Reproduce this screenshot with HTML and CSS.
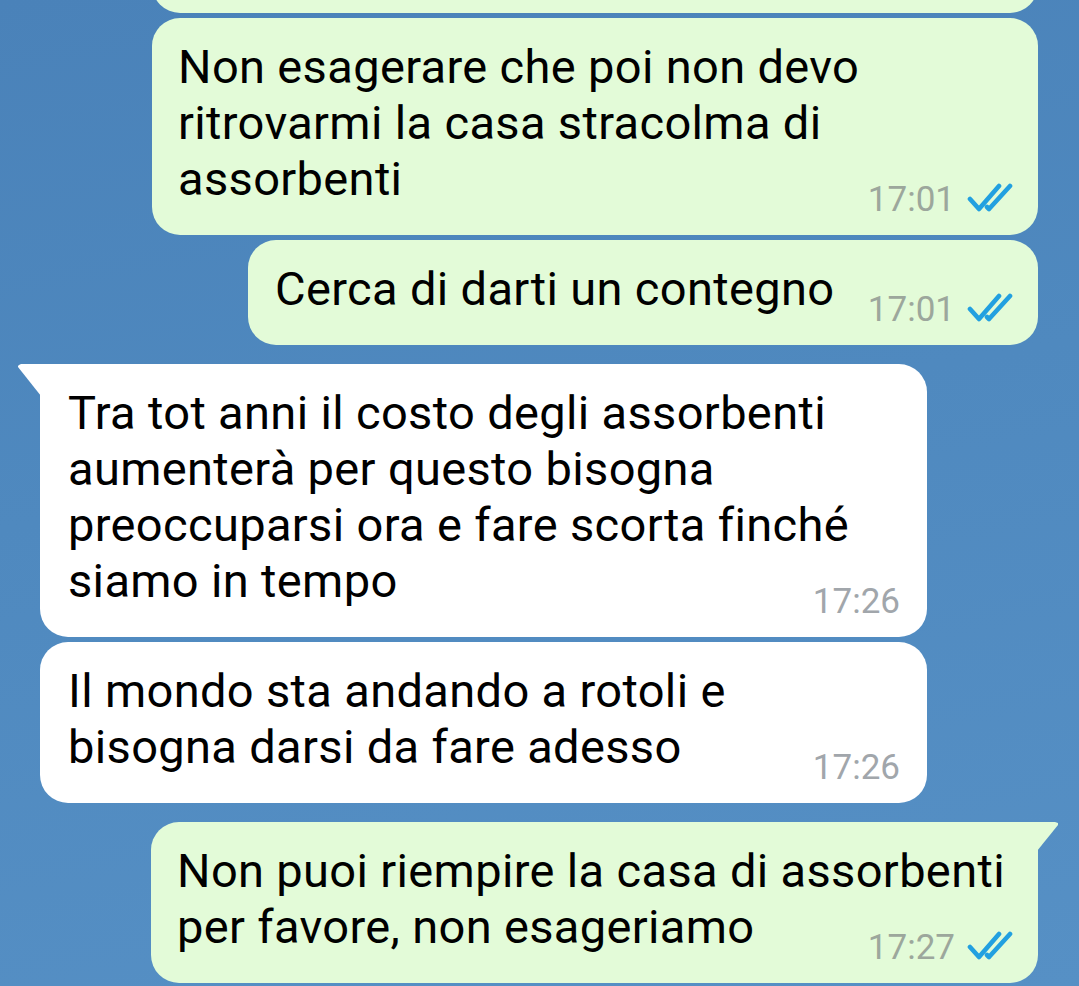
FILE: index.html
```html
<!DOCTYPE html>
<html lang="it">
<head>
<meta charset="utf-8">
<title>Chat</title>
<link rel="stylesheet" href="styles.css">
</head>
<body>
<main class="chat">
  <div class="row out first">
    <div class="bubble out b0"></div>
  </div>
  <div class="row out gap-s">
    <div class="bubble out b1">
      <div class="text">Non esagerare che poi non devo<br>ritrovarmi la casa stracolma di<br>assorbenti</div>
      <div class="meta"><span class="time">17:01</span><svg class="check" viewBox="0 0 46 30" width="46" height="30"><path d="M3 16 L12 26 L32 3"/><path d="M20 24 L22 26 L43 3"/></svg></div>
    </div>
  </div>
  <div class="row out gap-s">
    <div class="bubble out b2">
      <div class="text">Cerca di darti un contegno</div>
      <div class="meta"><span class="time">17:01</span><svg class="check" viewBox="0 0 46 30" width="46" height="30"><path d="M3 16 L12 26 L32 3"/><path d="M20 24 L22 26 L43 3"/></svg></div>
    </div>
  </div>
  <div class="row in gap-l">
    <div class="bubble in b3 tail-left">
      <div class="text">Tra tot anni il costo degli assorbenti<br>aumenterà per questo bisogna<br>preoccuparsi ora e fare scorta finché<br>siamo in tempo</div>
      <div class="meta"><span class="time">17:26</span></div>
    </div>
  </div>
  <div class="row in gap-s">
    <div class="bubble in b4">
      <div class="text">Il mondo sta andando a rotoli e<br>bisogna darsi da fare adesso</div>
      <div class="meta"><span class="time">17:26</span></div>
    </div>
  </div>
  <div class="row out gap-l">
    <div class="bubble out b5 tail-right">
      <div class="text">Non puoi riempire la casa di assorbenti<br>per favore, non esageriamo</div>
      <div class="meta"><span class="time">17:27</span><svg class="check" viewBox="0 0 46 30" width="46" height="30"><path d="M3 16 L12 26 L32 3"/><path d="M20 24 L22 26 L43 3"/></svg></div>
    </div>
  </div>
</main>
</body>
</html>
```

FILE: styles.css
```css
html, body {
  margin: 0;
  padding: 0;
}

body {
  width: 1079px;
  height: 986px;
  overflow: hidden;
  background: linear-gradient(170deg, #4a82b9 0%, #4f89bf 45%, #5690c5 100%);
  font-family: Roboto, "Noto Sans", "Liberation Sans", sans-serif;
  color: #000;
}

.chat {
  display: flex;
  flex-direction: column;
}

.row {
  display: flex;
}

.row.out {
  justify-content: flex-end;
  padding-right: 41px;
}

.row.in {
  justify-content: flex-start;
  padding-left: 40px;
}

.row.first {
  margin-top: -47px;
}

.row.gap-s {
  margin-top: 5px;
}

.row.gap-l {
  margin-top: 19px;
}

.bubble {
  position: relative;
  display: flex;
  align-items: flex-end;
  justify-content: space-between;
  box-sizing: border-box;
  border-radius: 28px;
  padding: 21px 25px 15px 26px;
}

.bubble.out {
  background: #e3fbd8;
}

.bubble.in {
  background: #ffffff;
  padding-left: 28px;
  padding-right: 27px;
}

.b0 {
  width: 886px;
  height: 60px;
}

.b1 {
  width: 886px;
}

.b2 {
  width: 790px;
  padding-left: 27px;
}

.b3,
.b4 {
  width: 887px;
}

.b5 {
  width: 887px;
}

.text {
  flex: 1;
  min-width: 0;
  font-size: 47px;
  line-height: 56px;
  letter-spacing: 0.35px;
  margin-bottom: 13px;
  white-space: nowrap;
}

.meta {
  display: flex;
  align-items: center;
  gap: 12px;
  flex-shrink: 0;
  margin-left: 12px;
}

.time {
  font-size: 35px;
  line-height: 40px;
  color: #9ca79c;
}

.bubble.in .time {
  color: #a1a6ab;
}

.check {
  display: block;
  margin-top: -4px;
}

.check path {
  fill: none;
  stroke: #22a0e0;
  stroke-width: 4.6;
  stroke-linecap: round;
  stroke-linejoin: round;
}

/* message tails */
.tail-left {
  border-top-left-radius: 0;
}

.tail-left::before {
  content: "";
  position: absolute;
  top: 0;
  left: -22px;
  width: 23px;
  height: 32px;
  background: #ffffff;
  clip-path: polygon(3px 0, 100% 0, 100% 100%, 0 3px, 0 2px, 1px 1px);
}

.tail-right {
  border-top-right-radius: 0;
}

.tail-right::after {
  content: "";
  position: absolute;
  top: 0;
  right: -20px;
  width: 21px;
  height: 29px;
  background: #e3fbd8;
  clip-path: polygon(0 0, calc(100% - 3px) 0, 100% 1px, 100% 3px, 0 100%);
}
```
